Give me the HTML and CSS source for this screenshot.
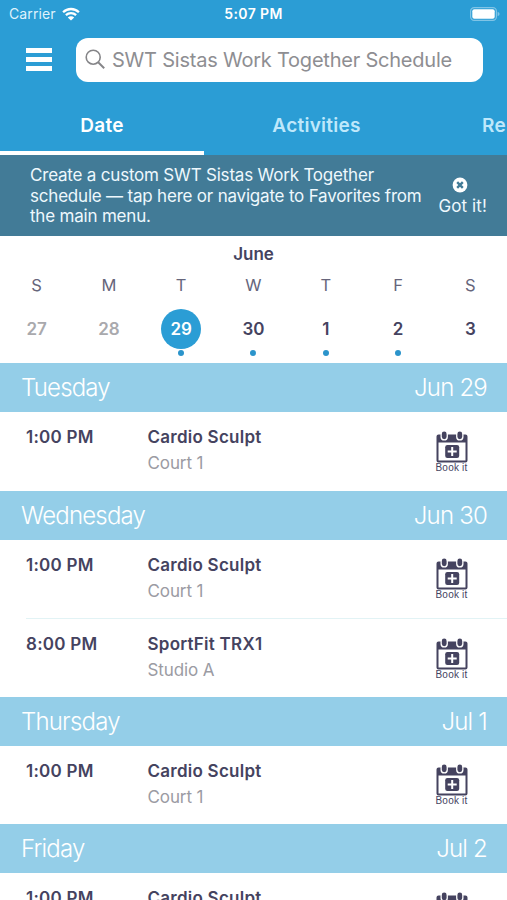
FILE: index.html
```html
<!DOCTYPE html>
<html lang="en">

<head>
    <meta charset="UTF-8">
    <meta name="viewport" content="width=device-width, initial-scale=1.0">
    <title>Schedule</title>
    <link rel="stylesheet" href="styles.css">
</head>

<body>
    <svg class="sprite" width="0" height="0">
        <symbol id="book" viewBox="0 0 32 32">
            <path d="M2.5 3.5h27a2 2 0 0 1 2 2V29.500a2 2 0 0 1-2 2h-27a2 2 0 0 1-2-2v-24a2 2 0 0 1 2-2z" fill="#45435f" />
            <path d="M2.500 11.500h27v18h-27z" fill="#fff" />
            <rect x="4.500" y="0" width="7.400" height="9.600" rx="3.700" fill="#fff" />
            <rect x="20.100" y="0" width="7.400" height="9.600" rx="3.700" fill="#fff" />
            <rect x="5.800" y="0.600" width="4.800" height="7.600" rx="2.400" fill="#45435f" />
            <rect x="21.400" y="0.600" width="4.800" height="7.600" rx="2.400" fill="#45435f" />
            <rect x="9.200" y="14" width="14" height="13" rx="2.200" fill="#45435f" />
            <path d="M16.200 16v9M11.700 20.500h9" stroke="#fff" stroke-width="2" />
        </symbol>
    </svg>
    <div class="app">
        <header class="header">
            <div class="status">
                <div class="carrier">
                    <span>Carrier</span>
                    <svg class="wifi" width="18" height="14" viewBox="0 0 18 14">
                        <path d="M1.1 5.2a11.3 11.3 0 0 1 15.8 0M3.9 8.2a7.4 7.4 0 0 1 10.2 0" fill="none" stroke="#fff" stroke-width="2.3" />
                        <path d="M9 13.6L5.8 10.5a4.6 4.6 0 0 1 6.4 0z" fill="#fff" />
                    </svg>
                </div>
                <span class="clock">5:07 PM</span>
                <svg class="battery" width="30" height="14" viewBox="0 0 30 14">
                    <rect x=".6" y=".6" width="25.8" height="12.8" rx="3.6" fill="none" stroke="#80c4e6" stroke-width="1.2" />
                    <rect x="2.3" y="2.3" width="22.4" height="9.4" rx="2" fill="#fff" />
                    <path d="M27.6 4.8q2 .8 2 2.2t-2 2.2z" fill="#80c4e6" />
                </svg>
            </div>
            <div class="search-row">
                <div class="menu">
                    <span></span>
                    <span></span>
                    <span></span>
                </div>
                <div class="search">
                    <svg width="21" height="21" viewBox="0 0 21 21" fill="none" stroke="#858588">
                        <circle cx="8.2" cy="8.2" r="7" stroke-width="1.6" />
                        <path d="M13.2 13.2l6 6" stroke-width="2" />
                    </svg>
                    <span class="query">SWT Sistas Work Together Schedule</span>
                </div>
            </div>
            <nav class="tabs">
                <span class="tab active">Date</span>
                <span class="tab">Activities</span>
                <span class="tab last">Re</span>
            </nav>
        </header>

        <div class="banner">
            <p class="message">Create a custom SWT Sistas Work Together<br>schedule — tap here or navigate to Favorites from<br>the main menu.</p>
            <div class="got-it">
                <svg width="16" height="16" viewBox="0 0 16 16">
                    <circle cx="8" cy="8" r="7.4" fill="#fff" />
                    <path d="M5.2 5.2l5.6 5.6M10.8 5.2l-5.6 5.6" stroke="#427b97" stroke-width="2.4" />
                </svg>
                <span>Got it!</span>
            </div>
        </div>

        <section class="calendar">
            <div class="month">June</div>
            <div class="week">
                <div class="day"><span class="name">S</span><span class="num past">27</span></div>
                <div class="day"><span class="name">M</span><span class="num past">28</span></div>
                <div class="day"><span class="name">T</span><span class="num today">29</span><i class="dot"></i></div>
                <div class="day"><span class="name">W</span><span class="num">30</span><i class="dot"></i></div>
                <div class="day"><span class="name">T</span><span class="num">1</span><i class="dot"></i></div>
                <div class="day"><span class="name">F</span><span class="num">2</span><i class="dot"></i></div>
                <div class="day"><span class="name">S</span><span class="num">3</span></div>
            </div>
        </section>

        <main class="list">
            <h2 class="date"><span>Tuesday</span><span>Jun 29</span></h2>
            <div class="row">
                <span class="time">1:00 PM</span>
                <div class="info"><span class="title">Cardio Sculpt</span><span class="place">Court 1</span></div>
                <div class="book"><svg><use href="#book" /></svg><span>Book it</span></div>
            </div>

            <h2 class="date"><span>Wednesday</span><span>Jun 30</span></h2>
            <div class="row">
                <span class="time">1:00 PM</span>
                <div class="info"><span class="title">Cardio Sculpt</span><span class="place">Court 1</span></div>
                <div class="book"><svg><use href="#book" /></svg><span>Book it</span></div>
            </div>
            <div class="row">
                <span class="time">8:00 PM</span>
                <div class="info"><span class="title">SportFit TRX1</span><span class="place">Studio A</span></div>
                <div class="book"><svg><use href="#book" /></svg><span>Book it</span></div>
            </div>

            <h2 class="date"><span>Thursday</span><span>Jul 1</span></h2>
            <div class="row">
                <span class="time">1:00 PM</span>
                <div class="info"><span class="title">Cardio Sculpt</span><span class="place">Court 1</span></div>
                <div class="book"><svg><use href="#book" /></svg><span>Book it</span></div>
            </div>

            <h2 class="date"><span>Friday</span><span>Jul 2</span></h2>
            <div class="row">
                <span class="time">1:00 PM</span>
                <div class="info"><span class="title">Cardio Sculpt</span><span class="place">Court 1</span></div>
                <div class="book"><svg><use href="#book" /></svg><span>Book it</span></div>
            </div>
        </main>
    </div>
</body>

</html>
```
FILE: styles.css
```css
* {
    margin: 0;
    padding: 0;
    box-sizing: border-box;
}

body {
    font-family: Inter, "Liberation Sans", sans-serif;
    color: #45435f;
    background: #fff;
}

.sprite {
    display: block;
}

.app {
    width: 507px;
    height: 900px;
    overflow: hidden;
}

/* header */
.header {
    height: 155px;
    background: #2b9dd5;
    color: #fff;
}

.status {
    height: 27px;
    padding: 0 7px 0 9px;
    display: grid;
    grid-template-columns: 1fr auto 1fr;
    align-items: center;
    font-size: 14px;
}

.carrier {
    display: flex;
    align-items: center;
    gap: 6px;
    color: #dff2fc;
    letter-spacing: .1px;
}

.clock {
    margin-right: 2px;
    font-weight: 600;
    letter-spacing: .4px;
}

.battery {
    justify-self: end;
}

.search-row {
    display: flex;
    align-items: center;
    height: 65px;
    padding: 0 24px 0 26px;
}

.menu {
    width: 26px;
    margin-right: 24px;
    display: flex;
    flex-direction: column;
    gap: 4px;
}

.menu span {
    height: 5px;
    background: #fff;
}

.search {
    flex: 1;
    height: 44px;
    padding-left: 9px;
    display: flex;
    align-items: center;
    gap: 6px;
    border-radius: 12px;
    background: #fff;
}

.query {
    font-size: 20px;
    letter-spacing: -.22px;
    color: #8e8e92;
    white-space: nowrap;
}

.tabs {
    display: flex;
    height: 63px;
}

.tab {
    flex: none;
    width: 215px;
    padding-top: 4px;
    line-height: 59px;
    text-align: center;
    font-size: 19px;
    font-weight: 600;
    letter-spacing: .25px;
    color: #bfe8fb;
}

.tab.active {
    width: 204px;
    margin-right: 5px;
    color: #fff;
    border-bottom: 4px solid #fff;
}

.tab.last {
    width: auto;
    margin-left: 58px;
}

/* favorites hint */
.banner {
    display: flex;
    justify-content: space-between;
    height: 81px;
    padding: 10px 20px 0 30px;
    background: #427b97;
    color: #eef8fd;
}

.message {
    font-size: 17px;
    line-height: 20.5px;
    letter-spacing: -.2px;
    white-space: nowrap;
}

.got-it {
    display: flex;
    flex-direction: column;
    align-items: center;
    padding-top: 12px;
    font-size: 17px;
    line-height: 26px;
    letter-spacing: .1px;
    white-space: nowrap;
}

.got-it svg {
    display: block;
    margin-right: 5px;
}

/* week strip */
.calendar {
    height: 127.3px;
}

.month {
    padding-top: 7px;
    text-align: center;
    font-size: 17px;
    font-weight: 600;
    line-height: 22px;
}

.week {
    display: grid;
    grid-template-columns: repeat(7, 72.3px);
    justify-content: center;
    padding-top: 10px;
}

.day {
    display: flex;
    flex-direction: column;
    align-items: center;
}

.name {
    font-size: 16.5px;
    line-height: 20px;
    color: #66657b;
}

.num {
    width: 40px;
    height: 40px;
    margin-top: 14px;
    line-height: 40px;
    border-radius: 50%;
    text-align: center;
    font-size: 17px;
    font-weight: 600;
}

.past {
    color: #a9a9ad;
}

.today {
    background: #2b9dd5;
    color: #fff;
}

.dot {
    width: 6px;
    height: 6px;
    margin-top: 1px;
    border-radius: 50%;
    background: #2b94cb;
}

/* schedule */
.date {
    display: flex;
    justify-content: space-between;
    height: 48.8px;
    padding: 0 20px 0 21px;
    line-height: 50px;
    font-size: 24px;
    font-weight: 350;
    letter-spacing: -.8px;
    background: #94cee8;
    color: #fff;
}

.row {
    display: flex;
    height: 78.7px;
    margin-left: 26px;
    padding-top: 13px;
}

.row + .row {
    border-top: 1.5px solid #e2f3f5;
}

.time,
.title {
    font-size: 17px;
    font-weight: 600;
    line-height: 25px;
    letter-spacing: .25px;
}

.time {
    width: 121.5px;
}

.info {
    flex: 1;
    display: flex;
    flex-direction: column;
}

.place {
    font-size: 17px;
    line-height: 26px;
    letter-spacing: -.1px;
    color: #9b9ba3;
}

.book {
    width: 34px;
    margin-right: 38.5px;
    padding-top: 5.5px;
    display: flex;
    flex-direction: column;
    align-items: center;
    font: 10px/10px "Liberation Sans", sans-serif;
    letter-spacing: .2px;
    white-space: nowrap;
}

.book svg {
    width: 32px;
    height: 32px;
}
```
